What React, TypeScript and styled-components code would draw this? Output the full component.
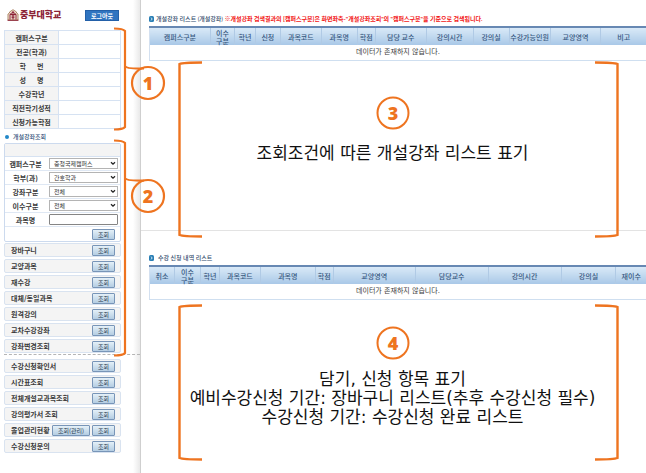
import React from "react";
import styled, { createGlobalStyle, css } from "styled-components";

const ORANGE = "#ee7420";
const KOREAN = `"Noto Sans CJK KR", sans-serif`;

const GlobalStyle = createGlobalStyle`
  *, *::before, *::after { box-sizing: border-box; }
  body {
    margin: 0;
    background: #fff;
    color: #3a3a3a;
    font-family: ${KOREAN};
    font-size: 7px;
    line-height: 10px;
  }
`;

const Page = styled.div`
  display: flex;
  min-height: 100vh;
`;

const Sidebar = styled.aside`
  position: relative;
  flex: none;
  width: 141px;
  padding: 9px 0 0 4px;
  border-right: 1px solid #cfcfcf;
  background: linear-gradient(to left, #e9e9e9, #fff 7px);
`;

const SidebarBody = styled.div`
  width: 117px;
`;

const Brand = styled.header`
  display: flex;
  align-items: center;
  justify-content: space-between;
  height: 12px;
  padding: 0 2px 0 3px;
  margin-bottom: 9px;
`;

const BrandName = styled.a`
  display: flex;
  align-items: center;
  gap: 1px;
  color: #8c2336;
  font-size: 9px;
  font-weight: 900;
  line-height: 12px;
  text-decoration: none;
  white-space: nowrap;
`;

const LogoutButton = styled.button`
  width: 34px;
  height: 11px;
  padding: 0;
  border: 1px solid #2360a8;
  background: #2f74c0;
  color: #fff;
  font: bold 6px/9px ${KOREAN};
`;

const InfoTable = styled.table`
  width: 100%;
  border: 1px solid #ccdaee;
  border-collapse: collapse;
  table-layout: fixed;

  th,
  td {
    height: 14px;
    padding: 0;
    border: 1px solid #d6e2f2;
    line-height: 10px;
  }
  th {
    width: 54px;
    background: #f4f4f4;
    font-weight: 700;
    white-space: pre;
  }
`;

const SideTitle = styled.h2`
  display: flex;
  align-items: center;
  gap: 4px;
  height: 10px;
  margin: 3px 0 1px 1px;
  color: #2f4f78;
  font-size: 6px;
  font-weight: 500;

  &::before {
    content: "";
    width: 4px;
    height: 4px;
    border-radius: 50%;
    background: #2287c8;
  }
`;

const SearchForm = styled.form`
  border: 1px solid #ccdaee;
  border-radius: 2px;
`;

const FormBand = styled.div`
  height: 13px;
  border-bottom: 1px solid #d6e2f2;
  background: #f4f4f4;
`;

const Field = styled.div`
  display: grid;
  grid-template-columns: 44px 69px;
  align-items: center;
  height: 14px;
  border-bottom: 1px solid #dfe8f4;
`;

const FieldLabel = styled.label`
  padding-right: 3px;
  font-weight: 700;
  text-align: center;
  white-space: nowrap;
`;

const controlBox = css`
  width: 100%;
  height: 11px;
  padding: 0 4px;
  border: 1px solid #b4b4b4;
  border-radius: 0;
  background: #fff;
  color: #333;
  font: 6px/9px ${KOREAN};
`;

const SelectWrap = styled.div`
  position: relative;
  display: flex;

  svg {
    position: absolute;
    right: 2px;
    top: 3px;
    pointer-events: none;
  }
`;

const Select = styled.select`
  ${controlBox}
  appearance: none;
`;

const TextInput = styled.input`
  ${controlBox}
  border-color: #858585;
  border-radius: 1px;
`;

const FormActions = styled.div`
  display: flex;
  justify-content: flex-end;
  align-items: center;
  height: 14px;
  padding-right: 5px;
`;

const QueryButton = styled.button<{ $wide?: boolean }>`
  flex: none;
  width: ${(p) => (p.$wide ? 38 : 23)}px;
  height: 11px;
  padding: 0;
  border: 1px solid #7895b8;
  border-radius: 1px;
  background: linear-gradient(#e4f0f8, #b4cde2);
  color: #26384c;
  font: 6px/9px ${KOREAN};
  white-space: nowrap;
`;

const MenuList = styled.ul`
  display: grid;
  gap: 2px;
  margin: 1px 0 0;
  padding: 0;
  list-style: none;
`;

const MenuRow = styled.li`
  display: flex;
  align-items: center;
  gap: 2px;
  height: 14px;
  padding: 0 5px 0 6px;
  border: 1px solid #d9e3f0;
  border-radius: 2px;
  background: #f4f4f4;
  font-weight: 700;
`;

const MenuLabel = styled.span`
  flex: 1;
  white-space: nowrap;
`;

const Divider = styled.hr`
  width: 136px;
  height: 0;
  margin: 1px 0 4px;
  border: 0;
  border-top: 1px dashed #b5b5b5;
`;

const SideMark = styled.svg`
  position: absolute;
  left: 112px;
  top: 26px;
  z-index: 1;
  overflow: visible;
  pointer-events: none;
`;

const MarkText = styled.text`
  fill: ${ORANGE};
  font: 800 18px "Open Sans", sans-serif;
  text-anchor: middle;
`;

const Main = styled.main`
  flex: 1;
  min-width: 0;
`;

const Panel = styled.section<{ $first?: boolean }>`
  position: relative;
  min-height: ${(p) => (p.$first ? 231 : 242)}px;
  padding: ${(p) => (p.$first ? 14 : 22)}px 0 0 8px;
  border-bottom: ${(p) => (p.$first ? "1px solid #e3e3e3" : "0")};
`;

const PanelTitle = styled.h2<{ $indent?: boolean }>`
  display: flex;
  align-items: center;
  gap: ${(p) => (p.$indent ? 4 : 2)}px;
  height: 10px;
  margin: 0 0 2px;
  color: #2f4a6c;
  font-family: Lato, ${KOREAN};
  font-size: 6px;
  font-weight: 500;
  white-space: nowrap;
`;

const Notice = styled.strong`
  color: #f21414;
  font-weight: 700;
`;

const ListTable = styled.table`
  width: 100%;
  border-collapse: collapse;
  table-layout: fixed;
  border-left: 1px solid #d3e0f0;

  thead {
    border-top: 2px solid #6788b3;
  }
  th {
    height: 18px;
    padding: 0;
    border-right: 1px solid #b0cae5;
    background: linear-gradient(#d9e9f7, #a9c8e7);
    color: #36577f;
    font-size: 7px;
    font-weight: 500;
    line-height: 8px;
    white-space: pre;
  }
  th:last-child {
    border-right: 0;
  }
  td {
    height: 15px;
    padding: 0;
    border-bottom: 1px solid #cfdff0;
    font-family: "DejaVu Sans", ${KOREAN};
    line-height: 10px;
    text-align: center;
  }
`;

const Callout = styled.div<{ $top: number; $height: number }>`
  position: absolute;
  top: ${(p) => p.$top}px;
  left: 36px;
  right: 26px;
  height: ${(p) => p.$height}px;
  display: flex;
  justify-content: space-between;

  > svg {
    flex: none;
  }
`;

const CalloutBody = styled.div<{ $offset: number; $gap: number }>`
  flex: 1;
  display: flex;
  flex-direction: column;
  align-items: center;
  gap: ${(p) => p.$gap}px;
  min-width: 0;
  margin: 0 -24px;
  padding: ${(p) => p.$offset}px 12px 0 0;

  p {
    margin: 0;
    color: #111;
    font: 17px/19px "DejaVu Sans", ${KOREAN};
    text-align: center;
    white-space: pre;
  }
`;

type Column = [label: string, width: number];

const courseColumns: Column[] = [
  ["캠퍼스구분", 61], ["이수\n구분", 24], ["학년", 21], ["신청", 25], ["과목코드", 41],
  ["과목명", 36], ["학점", 18], ["담당 교수", 51], ["강의시간", 47], ["강의실", 36],
  ["수강가능인원", 41], ["교양영역", 51], ["비고", 45],
];

const enrolledColumns: Column[] = [
  ["취소", 25], ["이수\n구분", 26], ["학년", 19], ["과목코드", 41], ["과목명", 55],
  ["학점", 18], ["교양영역", 82], ["담당교수", 73], ["강의시간", 73], ["강의실", 55],
  ["재이수", 30],
];

const infoLabels = ["캠퍼스구분", "전공(학과)", "학       번", "성       명", "수강학년", "직전학기성적", "신청가능학점"];

const filters = [
  { id: "campus", label: "캠퍼스구분", value: "충청국제캠퍼스" },
  { id: "dept", label: "학부(과)", value: "간호학과" },
  { id: "lecture", label: "강좌구분", value: "전체" },
  { id: "credit", label: "이수구분", value: "전체" },
];

const courseMenu = ["장바구니", "교양과목", "재수강", "대체/동일과목", "원격강의", "교차수강강좌", "강좌변경조회"];
const recordMenu = ["수강신청확인서", "시간표조회", "전체개설교과목조회", "강의평가서 조회", "졸업관리현황", "수강신청문의"];

const Crest = () => (
  <svg width="12" height="12" viewBox="0 0 12 12" aria-hidden="true">
    <path d="M1 11V5l1.500-1V3L6 .7 9.500 3v1L11 5v6z" fill="#f3e5d5" stroke="#a67b58" strokeWidth=".9" />
    <path d="M3 10.500V5.500h6v5M2.800 5.500 6 3l3.200 2.500M6 2v8.500M4.500 7h3M4.500 8.700h3" fill="none" stroke="#8c2336" />
    <path d="M.5 11.300h11" stroke="#8c2336" />
  </svg>
);

const Chevron = () => (
  <svg width="6" height="5" viewBox="0 0 6 5" aria-hidden="true">
    <path d="m1 1.200 2 2 2-2" fill="none" stroke="#222" strokeWidth="1.300" />
  </svg>
);

const Bullet = () => (
  <svg width="5" height="6" viewBox="0 0 5 6" aria-hidden="true">
    <rect width="5" height="6" rx="1.500" fill="#2a7fb5" />
    <path d="m1.800 1.600 1.500 1.400-1.500 1.400" fill="none" stroke="#fff" strokeWidth=".8" />
  </svg>
);

const Bracket = ({ height, right }: { height: number; right?: boolean }) => (
  <svg width="26" height={height} viewBox={`0 0 26 ${height}`} aria-hidden="true">
    <path
      d={
        right
          ? `M1 1.500Q20 1.500 23.500 3V${height - 3}Q20 ${height - 1.5} 1 ${height - 1.5}`
          : `M25 1.500Q6 1.500 2.500 3V${height - 3}Q6 ${height - 1.5} 25 ${height - 1.5}`
      }
      fill="none"
      stroke={ORANGE}
      strokeWidth="2.400"
    />
  </svg>
);

const NumberMark = ({ value }: { value: number }) => (
  <svg width="34" height="34" viewBox="0 0 34 34" role="img" aria-label={String(value)}>
    <circle cx="17" cy="17" r="15.500" fill="none" stroke={ORANGE} strokeWidth="2" />
    <MarkText x="17" y="24">{value}</MarkText>
  </svg>
);

const Menu = ({ items }: { items: string[] }) => (
  <MenuList>
    {items.map((item) => (
      <MenuRow key={item}>
        <MenuLabel>{item}</MenuLabel>
        {item === "졸업관리현황" && <QueryButton $wide>조회(관리)</QueryButton>}
        <QueryButton aria-label={`${item} 조회`}>조회</QueryButton>
      </MenuRow>
    ))}
  </MenuList>
);

const CourseTable = ({ columns }: { columns: Column[] }) => {
  const total = columns.reduce((sum, [, width]) => sum + width, 0);
  return (
    <ListTable>
      <colgroup>
        {columns.map(([label, width]) => (
          <col key={label} style={{ width: `${(width / total) * 100}%` }} />
        ))}
      </colgroup>
      <thead>
        <tr>
          {columns.map(([label]) => (
            <th key={label} scope="col">{label}</th>
          ))}
        </tr>
      </thead>
      <tbody>
        <tr>
          <td colSpan={columns.length}>데이터가 존재하지 않습니다.</td>
        </tr>
      </tbody>
    </ListTable>
  );
};

export default function App() {
  return (
    <>
      <GlobalStyle />
      <Page>
        <Sidebar>
          <SidebarBody>
            <Brand>
              <BrandName href="#"><Crest />중부대학교</BrandName>
              <LogoutButton>로그아웃</LogoutButton>
            </Brand>
            <InfoTable>
              <tbody>
                {infoLabels.map((label) => (
                  <tr key={label}>
                    <th scope="row">{label}</th>
                    <td />
                  </tr>
                ))}
              </tbody>
            </InfoTable>
            <SideTitle>개설강좌조회</SideTitle>
            <SearchForm onSubmit={(event) => event.preventDefault()}>
              <FormBand />
              {filters.map(({ id, label, value }) => (
                <Field key={id}>
                  <FieldLabel htmlFor={id}>{label}</FieldLabel>
                  <SelectWrap>
                    <Select id={id} defaultValue={value}>
                      <option>{value}</option>
                    </Select>
                    <Chevron />
                  </SelectWrap>
                </Field>
              ))}
              <Field>
                <FieldLabel htmlFor="subject">과목명</FieldLabel>
                <TextInput id="subject" type="text" />
              </Field>
              <FormActions>
                <QueryButton type="submit">조회</QueryButton>
              </FormActions>
            </SearchForm>
            <Menu items={courseMenu} />
            <Divider />
            <Menu items={recordMenu} />
          </SidebarBody>
          <SideMark width="54" height="332" viewBox="0 0 54 332" role="img" aria-label="1, 2">
            <g fill="none" stroke={ORANGE} strokeWidth="2.200">
              <path d="M2 2.500Q11 2.500 13 5V101Q11 103.500 2 103.500M13 40Q14 43 32 42.500" />
              <circle cx="36" cy="57" r="16" />
              <path d="M2 114.500Q11 114.500 13 117V327Q11 329.500 2 329.500M13 152Q14 155 32 154.500" />
              <circle cx="36" cy="170" r="16" />
            </g>
            <MarkText x="36" y="64">1</MarkText>
            <MarkText x="36" y="177">2</MarkText>
          </SideMark>
        </Sidebar>
        <Main>
          <Panel $first>
            <PanelTitle>
              <Bullet />
              <span>
                개설강좌 리스트 (개설강좌){" "}
                <Notice>
                  ※개설강좌 검색결과의 [캠퍼스구분]은 화면좌측-"개설강좌조회"의 "캠퍼스구분"을 기준으로 검색됩니다.
                </Notice>
              </span>
            </PanelTitle>
            <CourseTable columns={courseColumns} />
            <Callout $top={61} $height={177}>
              <Bracket height={177} />
              <CalloutBody $offset={35} $gap={14}>
                <NumberMark value={3} />
                <p>조회조건에 따른 개설강좌 리스트 표기</p>
              </CalloutBody>
              <Bracket height={177} right />
            </Callout>
          </Panel>
          <Panel>
            <PanelTitle $indent>
              <Bullet />
              <span>수강 신청 내역 리스트</span>
            </PanelTitle>
            <CourseTable columns={enrolledColumns} />
            <Callout $top={73} $height={157}>
              <Bracket height={157} />
              <CalloutBody $offset={22} $gap={10}>
                <NumberMark value={4} />
                <p>{"담기, 신청 항목 표기\n예비수강신청 기간: 장바구니 리스트(추후 수강신청 필수)\n수강신청 기간: 수강신청 완료 리스트"}</p>
              </CalloutBody>
              <Bracket height={157} right />
            </Callout>
          </Panel>
        </Main>
      </Page>
    </>
  );
}
